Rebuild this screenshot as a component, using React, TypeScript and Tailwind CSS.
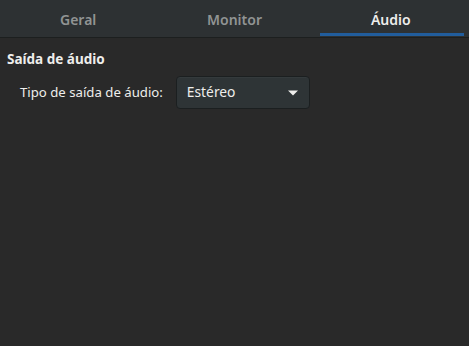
import { useState } from "react"

const TABS = ["Geral", "Monitor", "Áudio"]

const Tab = ({ label, active, onClick }: { label: string; active: boolean; onClick: () => void }) => (
  <button
    type="button"
    onClick={onClick}
    className={[
      "relative flex h-full flex-1 items-center justify-center pt-[1px] text-[14px] font-semibold",
      active ? "text-[#eeeeec]" : "text-[#919494]",
    ].join(" ")}
  >
    {label}
    {active && <span className="absolute bottom-[1px] left-[7px] right-[5px] h-[3px] bg-[#215d9c]" />}
  </button>
)

export default function App() {
  const [tab, setTab] = useState(2)

  return (
    <div
      className="flex h-[346px] w-[469px] flex-col bg-[#292929] text-[#eeeeec]"
      style={{ fontFamily: "'Noto Sans', 'DejaVu Sans', sans-serif" }}
    >
      {/* tab strip */}
      <div className="flex h-[38px] border-b border-[#1c1f1f] bg-[#2d3133]">
        {TABS.map((t, i) => (
          <Tab key={t} label={t} active={tab === i} onClick={() => setTab(i)} />
        ))}
      </div>

      <div className="flex flex-col px-[7px] pt-[12px]">
        <div className="text-[13.5px] font-bold leading-[18px]">Saída de áudio</div>
        <div className="mt-[8px] flex items-center gap-[13px] pl-[13px]">
          <span className="text-[13.2px]">Tipo de saída de áudio:</span>
          <button
            type="button"
            className="flex h-[33px] w-[134px] items-center justify-between rounded-[4px] border border-[#1b1f20] bg-[#2e3436] pl-[10px] pr-[11px] text-[13.8px] text-[#eeeeec] shadow-[inset_0_1px_0_rgba(255,255,255,0.03)]"
          >
            <span>Estéreo</span>
            <svg width="10" height="6" viewBox="0 0 10 6" aria-hidden>
              <path d="M0 0.5 L10 0.5 L5 5.5 Z" fill="#eeeeec" />
            </svg>
          </button>
        </div>
      </div>
    </div>
  )
}
